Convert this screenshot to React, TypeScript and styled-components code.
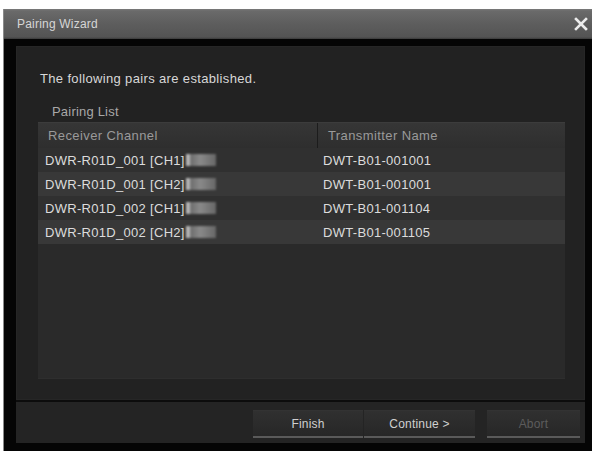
import React from "react";
import styled, { createGlobalStyle } from "styled-components";

const Global = createGlobalStyle`
  html, body { margin: 0; padding: 0; background: #ffffff; }
  body { font-family: "Liberation Sans", Arial, sans-serif; }
  #root { width: 595px; height: 451px; overflow: hidden; }
`;

const Window = styled.div`
  margin: 9px 3px 0 3px;
  width: 589px;
  height: 442px;
  display: flex;
  flex-direction: column;
  background: #050505;
  border-left: 1px solid #8a8a8a;
  box-sizing: border-box;
`;

const TitleBar = styled.div`
  height: 30px;
  flex: none;
  display: flex;
  align-items: center;
  justify-content: space-between;
  padding: 0 4px 0 13px;
  background: linear-gradient(#7a7a7a 0px, #6a6a6a 2px, #5e5e5e 14px, #545454 28px, #3a3a3a 30px);
  color: #d6d6d6;
  font-size: 12px;
  letter-spacing: 0.2px;
  box-sizing: border-box;
`;

const CloseIcon = styled.svg`
  width: 14px;
  height: 14px;
  display: block;
`;

const Frame = styled.div`
  flex: 1;
  display: flex;
  flex-direction: column;
  padding: 7px 7px 8px 12px;
  box-sizing: border-box;
  min-height: 0;
`;

const Panel = styled.div`
  height: 354px;
  flex: none;
  background: #222222;
  box-shadow: inset 0 0 0 1px #262626;
  padding: 25px 20px 21px 22px;
  box-sizing: border-box;
  display: flex;
  flex-direction: column;
`;

const Message = styled.div`
  color: #d8d8d8;
  font-size: 13px;
  line-height: 16px;
  letter-spacing: 0.35px;
  padding-left: 2px;
`;

const ListLabel = styled.div`
  color: #a8a8a8;
  font-size: 13px;
  line-height: 16px;
  letter-spacing: 0.2px;
  margin-top: 17px;
  padding-left: 14px;
  margin-bottom: 2px;
`;

const Table = styled.div`
  flex: 1;
  display: flex;
  flex-direction: column;
  background: #2a2a2a;
  box-shadow: inset 0 -1px 0 #2e2e2e;
`;

const HeaderRow = styled.div`
  height: 26px;
  flex: none;
  display: grid;
  grid-template-columns: 279px 1fr;
  background: linear-gradient(#363636, #2e2e2e);
  border-top: 1px solid #3c3c3c;
  box-sizing: border-box;
`;

const HeaderCell = styled.div<{ $divider?: boolean }>`
  display: flex;
  align-items: center;
  padding-left: 10px;
  color: #9a9a9a;
  font-size: 13px;
  letter-spacing: 0.4px;
  border-left: ${(p) => (p.$divider ? "1px solid #1c1c1c" : "none")};
`;

const Row = styled.div<{ $alt: boolean }>`
  height: 24px;
  flex: none;
  display: grid;
  grid-template-columns: 279px 1fr;
  background: ${(p) => (p.$alt ? "#383838" : "#303030")};
`;

const Cell = styled.div<{ $second?: boolean }>`
  display: flex;
  align-items: center;
  padding-left: ${(p) => (p.$second ? "6px" : "7px")};
  color: #dcdcdc;
  font-size: 13px;
  letter-spacing: 0.3px;
  white-space: nowrap;
`;

const Blur = styled.span`
  display: inline-block;
  width: 30px;
  height: 12px;
  margin-left: 1px;
  background: linear-gradient(90deg, #b8b8b8 0px, #b8b8b8 3px, #6e6e6e 5px, #8a8a8a 14px, #666 30px);
  filter: blur(1.2px);
`;

const Separator = styled.div`
  height: 2px;
  flex: none;
  background: #0c0c0c;
`;

const Footer = styled.div`
  flex: 1;
  display: flex;
  justify-content: flex-end;
  align-items: flex-start;
  padding: 8px 5px 0 0;
  background: #242424;
  gap: 12px;
`;

const ButtonGroup = styled.div`
  display: flex;
  gap: 1px;
`;

const Button = styled.button<{ $w: number; $disabled?: boolean }>`
  width: ${(p) => p.$w}px;
  height: 28px;
  border: none;
  border-top: 1px solid #333;
  border-bottom: 2px solid #5a5a5a;
  background: linear-gradient(#303030, #272727);
  color: ${(p) => (p.$disabled ? "#5c5c5c" : "#d0d0d0")};
  font-family: "Liberation Sans", Arial, sans-serif;
  font-size: 12px;
  letter-spacing: 0.2px;
  padding: 0;
  box-sizing: border-box;
`;

const rows = [
  ["DWR-R01D_001 [CH1]", "DWT-B01-001001"],
  ["DWR-R01D_001 [CH2]", "DWT-B01-001001"],
  ["DWR-R01D_002 [CH1]", "DWT-B01-001104"],
  ["DWR-R01D_002 [CH2]", "DWT-B01-001105"],
];

export default function App() {
  return (
    <>
      <Global />
      <Window>
        <TitleBar>
          <span>Pairing Wizard</span>
          <CloseIcon viewBox="0 0 14 14">
            <path d="M2 2 L12 12 M12 2 L2 12" stroke="#ececec" strokeWidth="2.6" strokeLinecap="square" />
          </CloseIcon>
        </TitleBar>
        <Frame>
          <Panel>
            <Message>The following pairs are established.</Message>
            <ListLabel>Pairing List</ListLabel>
            <Table>
              <HeaderRow>
                <HeaderCell>Receiver Channel</HeaderCell>
                <HeaderCell $divider>Transmitter Name</HeaderCell>
              </HeaderRow>
              {rows.map(([rx, tx], i) => (
                <Row key={i} $alt={i % 2 === 1}>
                  <Cell>
                    {rx}
                    <Blur />
                  </Cell>
                  <Cell $second>{tx}</Cell>
                </Row>
              ))}
            </Table>
          </Panel>
          <Separator />
          <Footer>
            <ButtonGroup>
              <Button $w={110}>Finish</Button>
              <Button $w={111}>Continue &gt;</Button>
            </ButtonGroup>
            <Button $w={93} $disabled>
              Abort
            </Button>
          </Footer>
        </Frame>
      </Window>
    </>
  );
}
